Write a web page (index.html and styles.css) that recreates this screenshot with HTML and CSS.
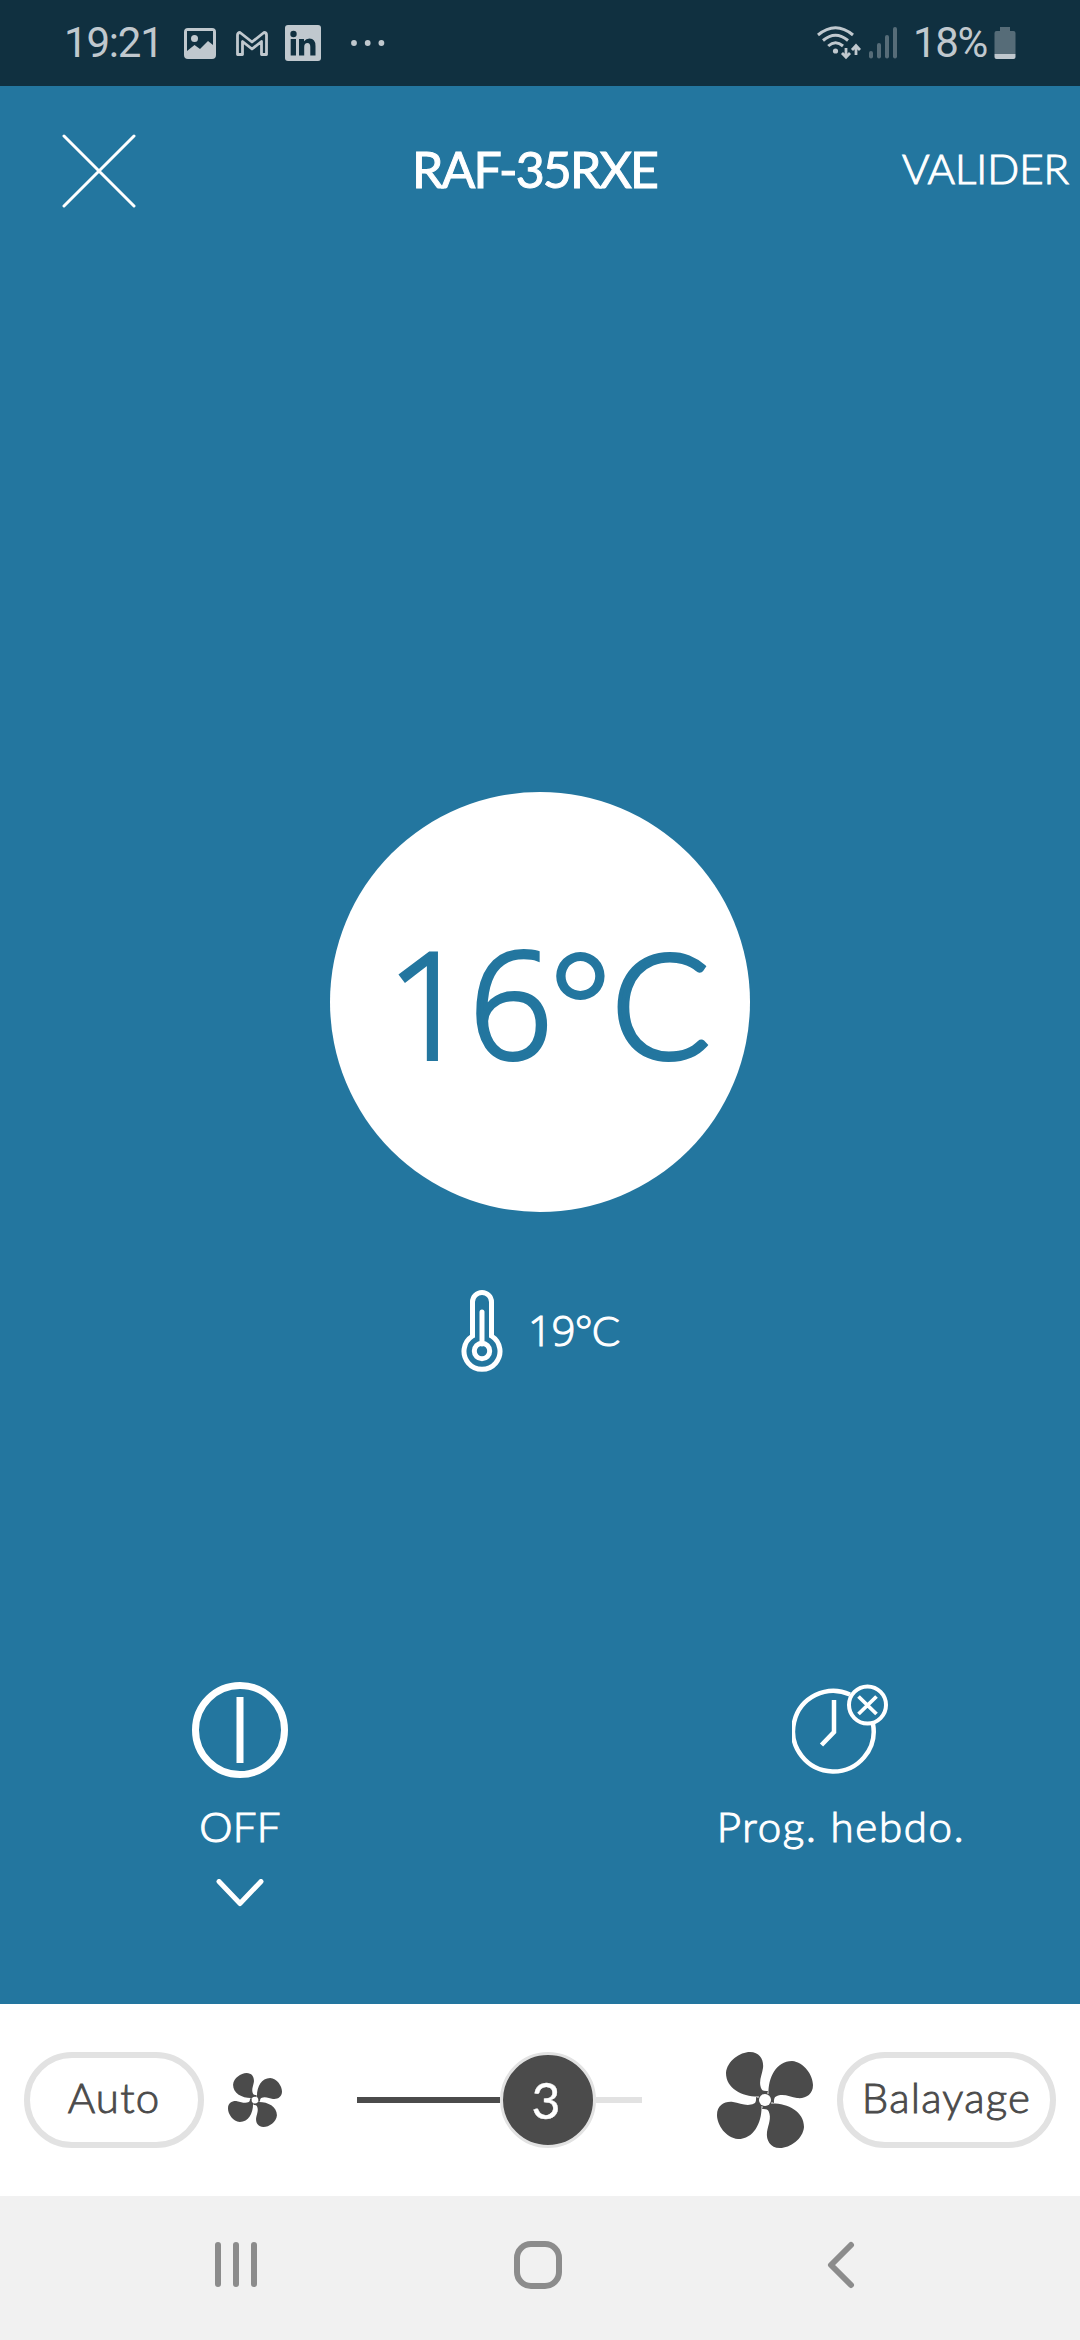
FILE: index.html
```html
<!DOCTYPE html>
<html lang="fr">
<head>
<meta charset="utf-8">
<title>RAF-35RXE</title>
<link rel="stylesheet" href="styles.css">
</head>
<body>
<svg class="defs" width="0" height="0" aria-hidden="true">
  <defs>
    <path id="blade" d="M33 0C43 0 47 8 46 16C45 23 41 30 44.500 37Q45.500 39.500 51 39L48 48L39 51L42 44.500C26 45 9 37 9 21C10 9 23 0 33 0Z"/>
    <symbol id="fan" viewBox="0 0 96 96">
      <use href="#blade"/>
      <use href="#blade" transform="rotate(90 48 48)"/>
      <use href="#blade" transform="rotate(180 48 48)"/>
      <use href="#blade" transform="rotate(270 48 48)"/>
      <circle cx="48" cy="48" r="6" fill="#fff"/>
    </symbol>
  </defs>
</svg>
<div class="screen">
  <header class="status">
    <div class="status-left">
      <span class="clock">19:21</span>
      <svg class="ic-picture" width="32" height="31" viewBox="0 0 32 31"><path fill-rule="evenodd" d="M4 0H28Q32 0 32 4V27Q32 31 28 31H4Q0 31 0 27V4Q0 0 4 0ZM3 3V23L10.500 17L16 21L24 13L29 17V3Z"/><circle cx="10.500" cy="10.500" r="3.500"/></svg>
      <svg class="ic-mail" width="32" height="25" viewBox="0 0 32 25"><path fill="none" stroke="currentColor" stroke-width="2.800" stroke-linejoin="round" d="M1.500 4Q1.500 1.500 4 1.500L16 11L28 1.500Q30.500 1.500 30.500 4V23.500H25.500V10.500L16 18L6.500 10.500V23.500H1.500Z"/></svg>
      <svg class="ic-in" width="36" height="36" viewBox="0 0 36 36"><rect width="36" height="36" rx="3"/><g fill="#103040"><circle cx="8.500" cy="9" r="3.200"/><path d="M5.700 14H11V30.500H5.700ZM14 14H19V16.300Q21 13.500 24.500 13.500Q30.500 13.500 30.500 21V30.500H25.300V22Q25.300 18 22.500 18Q19.200 18 19.200 22V30.500H14Z"/></g></svg>
      <svg class="ic-more" width="34" height="6" viewBox="0 0 34 6"><circle cx="3" cy="3" r="2.900"/><circle cx="16.700" cy="3" r="2.900"/><circle cx="30.400" cy="3" r="2.900"/></svg>
    </div>
    <div class="status-right">
      <svg width="44" height="34" viewBox="0 0 44 34"><g fill="none" stroke="currentColor" stroke-width="3"><path d="M1 9Q18.500 -5.500 36 9M6 14.500Q18.500 4 31 14.500M11.200 20Q18.500 13.500 26 20"/><path d="M29 22V30M25 27L29 31.200L33 27M39 29V20M35 24L39 19.500L43 24" stroke-width="2.800"/></g><circle cx="18.500" cy="25" r="2.600"/></svg>
      <svg class="ic-signal" width="28" height="32" viewBox="0 0 28 32"><g fill="#566c78"><rect y="24" width="4" height="7.500" rx="2"/><rect x="8" y="16" width="4" height="15.500" rx="2"/><rect x="16" y="8" width="4" height="23.500" rx="2"/><rect x="24" y="0" width="4" height="31.500" rx="2"/></g></svg>
      <span class="percent">18%</span>
      <svg class="ic-battery" width="22" height="32" viewBox="0 0 22 32"><path fill="#566c78" d="M6 0H16V4H19.500Q21.500 4 21.500 6V27H0.500V6Q0.500 4 2.500 4H6Z"/><path d="M0.500 27H21.500V30Q21.500 32 19.500 32H2.500Q0.500 32 0.500 30Z"/></svg>
    </div>
  </header>

  <main class="main">
    <nav class="titlebar">
      <svg class="close" width="74" height="74" viewBox="0 0 74 74"><path d="M2 2L72 72M72 2L2 72"/></svg>
      <h1 class="title">RAF-35RXE</h1>
      <span class="validate">VALIDER</span>
    </nav>
    <section class="dial">
      <div class="setpoint"><span class="digit">1</span><span class="digit six">6</span><span class="deg">°</span><span class="unit">C</span></div>
    </section>
    <div class="ambient">
      <svg width="42" height="82" viewBox="0 0 42 82"><g fill="none" stroke="#fff" stroke-width="5"><path d="M11.500 46V12A9.500 9.500 0 0 1 30.500 12V46A18 18 0 1 1 11.500 46Z"/><circle cx="21" cy="61" r="7.700"/><path d="M21 54V22" stroke-linecap="round"/></g></svg>
      <span class="ambient-value"><span class="digits">19</span><span class="small-deg">°</span>C</span>
    </div>
    <section class="actions">
      <div class="action">
        <svg width="96" height="96" viewBox="0 0 96 96"><g fill="none" stroke="#fff" stroke-width="7"><circle cx="48" cy="48" r="44.500"/><path d="M48 15V81"/></g></svg>
        <span class="label off">OFF</span>
        <svg class="chevron" width="48" height="28" viewBox="0 0 48 28"><path d="M3 2.500L24 24.500L45 2.500"/></svg>
      </div>
      <div class="action">
        <svg width="96" height="96" viewBox="0 0 96 96"><g fill="none" stroke="#fff" stroke-width="4.500"><path d="M58 12.500A40.300 40.300 0 1 0 81 42"/><path d="M42 18V50L29.500 63"/><circle cx="75.500" cy="23" r="18.500" stroke-width="4"/><path d="M66.500 14.500L84.500 32M84.500 14.500L66.500 32" stroke-width="3.800"/></g></svg>
        <span class="label prog">Prog. hebdo.</span>
      </div>
    </section>
  </main>

  <section class="controls">
    <div class="pill auto">Auto</div>
    <svg class="fan fan-small" width="54" height="54"><use href="#fan"/></svg>
    <div class="slider">
      <div class="track-on"></div>
      <div class="thumb"><span>3</span></div>
      <div class="track-off"></div>
    </div>
    <svg class="fan fan-large" width="96" height="96"><use href="#fan"/></svg>
    <div class="pill sweep">Balayage</div>
  </section>

  <footer class="nav">
    <svg width="44" height="48" viewBox="0 0 44 48"><path d="M4 4V43M22 4V43M40 4V43"/></svg>
    <svg width="50" height="50" viewBox="0 0 50 50"><rect x="4" y="4" width="42" height="42" rx="14"/></svg>
    <svg width="30" height="48" viewBox="0 0 30 48"><path d="M25 4L5 24L25 44"/></svg>
  </footer>
</div>
</body>
</html>
```
FILE: styles.css
```css
* { box-sizing: border-box; }
body { margin: 0; font-family: Lato, "Open Sans", sans-serif; font-weight: 300; color: #fff; }
svg { display: block; flex: none; }
.defs { position: absolute; }
.screen { width: 1080px; height: 2340px; display: flex; flex-direction: column; overflow: hidden; background: #23769f; }

.status { height: 86px; flex: none; display: flex; justify-content: space-between; align-items: center; padding: 0 64px; background: #103040; color: #c0c8ce; fill: #c0c8ce; font: 400 42px/50px Roboto, sans-serif; }
.status-left, .status-right { display: flex; align-items: center; height: 84px; }
.clock { width: 120px; letter-spacing: -1.2px; }
.ic-mail { margin-left: 20px; }
.ic-in { margin-left: 17px; }
.ic-more { margin-left: 30px; }
.ic-signal { margin-left: 8px; }
.percent { width: 81px; margin-left: 16px; letter-spacing: -1.4px; }

.main { height: 1918px; flex: none; display: flex; flex-direction: column; }
.titlebar { height: 170px; flex: none; display: grid; grid-template-columns: 353px 1fr 353px; align-items: center; padding: 0 11px 0 0; }
.close { margin-left: 62px; fill: none; stroke: #fff; stroke-width: 3; stroke-linecap: round; }
.title { margin: 0 0 4px; font-size: 50px; line-height: 60px; font-weight: 400; text-align: center; letter-spacing: -1.9px; white-space: nowrap; -webkit-text-stroke: 1px currentColor; }
.validate { margin-bottom: 6px; font-size: 42px; line-height: 50px; text-align: right; letter-spacing: 0; }
.validate, .label, .pill, .ambient-value { -webkit-text-stroke: 1.1px currentColor; }

.dial { width: 420px; height: 420px; flex: none; margin: 536px 0 0 330px; padding-left: 57px; border-radius: 50%; background: #fff; color: #23769f; display: flex; align-items: center; }
.setpoint { display: flex; font-size: 147px; line-height: 180px; -webkit-text-stroke: 4px currentColor; }
.digit { width: 82px; font-family: "Open Sans", sans-serif; font-weight: 300; }
.six { width: 81px; }
.deg { width: 61px; }
.ambient { height: 82px; flex: none; margin: 78px 0 0 461px; display: flex; align-items: center; gap: 25px; font-size: 42px; line-height: 50px; }
.ambient-value { display: flex; margin-bottom: 2px; letter-spacing: -0.5px; }
.digits { font-family: "Open Sans", sans-serif; font-weight: 300; }
.actions { flex: none; margin-top: 310px; padding: 0 120px; display: flex; justify-content: space-between; }
.action { width: 240px; display: flex; flex-direction: column; align-items: center; }
.label { margin-top: 23px; font-size: 42px; line-height: 50px; white-space: nowrap; }
.off { letter-spacing: 0.3px; }
.prog { letter-spacing: 1.7px; padding-left: 2px; }
.chevron { margin-top: 28px; fill: none; stroke: #fff; stroke-width: 5; stroke-linecap: round; stroke-linejoin: round; }

.controls { height: 192px; flex: none; display: flex; align-items: center; padding: 0 24px; background: #fff; color: #4b4b4b; }
.pill { height: 96px; border: 6px solid #e2e2e2; border-radius: 48px; font-size: 42px; line-height: 79px; text-align: center; letter-spacing: 1.2px; white-space: nowrap; -webkit-text-stroke-width: 0.9px; }
.auto { width: 180px; }
.sweep { width: 219px; margin-left: 24px; }
.fan { fill: #4b4b4b; }
.fan-small { margin-left: 24px; }
.fan-large { margin-left: 75px; }
.slider { width: 285px; margin-left: 75px; display: flex; align-items: center; }
.track-on { width: 143px; height: 6px; background: #4b4b4b; }
.thumb { width: 96px; height: 96px; border: 3px solid #e2e2e2; border-radius: 50%; background: #4b4b4b; color: #fff; display: flex; align-items: center; justify-content: center; padding-right: 4px; font-size: 50px; font-weight: 400; line-height: 60px; -webkit-text-stroke: 0.4px currentColor; }
.track-off { flex: 1; height: 6px; background: #e2e2e2; }

.nav { height: 144px; flex: none; display: grid; grid-template-columns: 299px 313px 1fr; align-items: center; padding: 0 0 6px 214px; background: #f1f1f1; fill: none; stroke: #8c8c8c; stroke-width: 6; stroke-linecap: round; stroke-linejoin: round; }
```
